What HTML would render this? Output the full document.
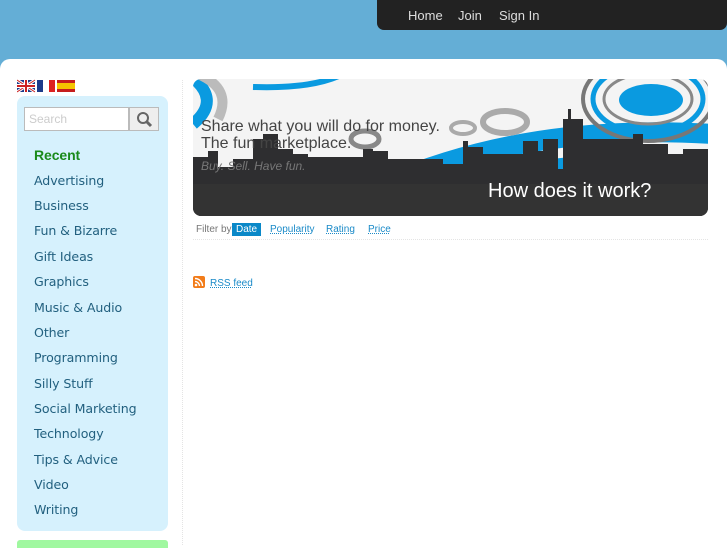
<!DOCTYPE html>
<html><head><meta charset="utf-8"><style>
*{margin:0;padding:0;box-sizing:border-box}
body{width:727px;height:545px;overflow:hidden;background:#64aed6;font-family:"Liberation Sans","DejaVu Sans",sans-serif;position:relative}
.nav{position:absolute;left:377px;top:0;width:350px;height:30px;background:#222;border-radius:0 0 7px 7px}
.nav span{position:absolute;top:8px;color:#ddd;font-size:13px;font-family:"Liberation Sans",sans-serif}
.page{position:absolute;left:0;top:59px;width:727px;height:500px;background:#fff;border-radius:10px 10px 0 0}
.flags{position:absolute;left:17px;top:79px}
.side{position:absolute;left:17px;top:96px;width:151px;height:435px;background:#d6f1fd;border-radius:8px}
.search{position:absolute;left:7px;top:11px;width:105px;height:24px;border:1px solid #bbb;background:#fff;color:#ccc;font-size:12px;padding:4px 4px}
.btn{position:absolute;left:112px;top:11px;width:30px;height:24px;border:1px solid #bbb;background:#eee}
.side a{position:absolute;left:17px;font-size:12.6px;color:#22607f;text-decoration:none;font-family:"DejaVu Sans",sans-serif;letter-spacing:-0.1px}
.green{position:absolute;left:17px;top:540px;width:151px;height:8px;background:#a0f8a0;border-radius:3px 3px 0 0}
.vline{position:absolute;left:182px;top:80px;height:465px;border-left:1px dotted #e4e4e4}
.banner{position:absolute;left:193px;top:79px;width:515px;height:137px;border-radius:8px;overflow:hidden;background:#f2f2f2}
.filter{position:absolute;left:193px;top:220px;width:515px;height:20px;border-bottom:1px dotted #e4e4e4;font-size:10px;color:#777}
.filter span{position:absolute;top:4px}
.filter a{color:#1a8ac8;text-decoration:underline dotted}
</style></head><body>
<div class="nav"><span style="left:31px">Home</span><span style="left:81px">Join</span><span style="left:122px">Sign In</span></div>
<div class="page"></div>
<svg class="flags" width="60" height="14" viewBox="0 0 60 14">
<rect x="0" y="1" width="18" height="12" fill="#1c3a8a"/><path d="M0 1L18 13M18 1L0 13" stroke="#fff" stroke-width="3"/><path d="M0 1L18 13M18 1L0 13" stroke="#c22" stroke-width="1"/><rect x="7" y="1" width="4" height="12" fill="#fff"/><rect x="0" y="5" width="18" height="4" fill="#fff"/><rect x="8" y="1" width="2" height="12" fill="#c22"/><rect x="0" y="6" width="18" height="2" fill="#c22"/>
<rect x="20" y="1" width="6" height="12" fill="#1c3a8a"/><rect x="26" y="1" width="6" height="12" fill="#fff"/><rect x="32" y="1" width="6" height="12" fill="#d22"/>
<rect x="40" y="1" width="18" height="12" fill="#c61d1d"/><rect x="40" y="4" width="18" height="6" fill="#f5c400"/>
</svg>
<div class="side">
<div class="search">Search</div>
<div class="btn"><svg width="28" height="22" viewBox="0 0 28 22"><circle cx="13" cy="10" r="5" fill="none" stroke="#666" stroke-width="2"/><path d="M16.5 13.5L21 18" stroke="#666" stroke-width="3"/></svg></div>
<a style="top:51px;color:#1a8a1a;font-weight:bold;font-family:'Liberation Sans',sans-serif;font-size:14px">Recent</a>
<a style="top:77px">Advertising</a>
<a style="top:102px">Business</a>
<a style="top:127px">Fun &amp; Bizarre</a>
<a style="top:153px">Gift Ideas</a>
<a style="top:178px">Graphics</a>
<a style="top:204px">Music &amp; Audio</a>
<a style="top:229px">Other</a>
<a style="top:254px">Programming</a>
<a style="top:280px">Silly Stuff</a>
<a style="top:305px">Social Marketing</a>
<a style="top:330px">Technology</a>
<a style="top:356px">Tips &amp; Advice</a>
<a style="top:381px">Video</a>
<a style="top:406px">Writing</a>
</div>
<div class="green"></div>
<div class="vline"></div>
<div class="banner"><svg width="515" height="137" viewBox="0 0 515 137">
<rect width="515" height="137" fill="#f4f4f4"/>
<path d="M-5 -5 Q30 20 0 45" fill="none" stroke="#0a9ae0" stroke-width="12"/>
<path d="M60 8 Q120 10 150 -5" fill="none" stroke="#0a9ae0" stroke-width="6"/>
<path d="M5 -5 Q40 10 25 40" fill="none" stroke="#bbb" stroke-width="10"/>
<path d="M110 150 Q280 40 520 55" fill="none" stroke="#0a9ae0" stroke-width="20"/>
<path d="M170 150 Q320 70 520 90" fill="none" stroke="#0a9ae0" stroke-width="22"/>
<ellipse cx="455" cy="20" rx="65" ry="42" fill="none" stroke="#777" stroke-width="4"/>
<ellipse cx="455" cy="20" rx="55" ry="34" fill="none" stroke="#0a9ae0" stroke-width="5"/>
<ellipse cx="455" cy="20" rx="44" ry="25" fill="none" stroke="#888" stroke-width="3"/>
<ellipse cx="458" cy="21" rx="32" ry="16" fill="#0a9ae0"/>
<ellipse cx="312" cy="43" rx="22" ry="11" fill="none" stroke="#aaa" stroke-width="6"/>
<ellipse cx="270" cy="49" rx="12" ry="6" fill="none" stroke="#aaa" stroke-width="4"/>
<ellipse cx="172" cy="60" rx="14" ry="8" fill="none" stroke="#888" stroke-width="5"/>
<path d="M0 137V78H15V72H25V88H40V80H60V60H70V55H85V70H100V75H115V78H170V70H180V72H195V80H250V85H270V62H275V68H290V75H330V62H345V72H350V60H365V90H370V40H375V30H378V40H390V60H440V55H450V65H475V75H490V70H515V137Z" fill="#2e2e30"/>
<path d="M0 105H515V137H0Z" fill="#333"/>
</svg>
<div style="position:absolute;left:8px;top:39px;font-size:16px;color:#444;line-height:17px">Share what you will do for money.<br>The fun marketplace.</div>
<div style="position:absolute;left:8px;top:80px;font-size:12px;color:#777;font-style:italic">Buy. Sell. Have fun.</div>
<div style="position:absolute;left:295px;top:101px;font-size:20px;color:#fff">How does it work?</div>
</div>
<div class="filter"><span style="left:3px">Filter by</span><span style="left:39px;top:3px;background:#0a88c8;color:#fff;padding:1px 4px">Date</span><span style="left:77px"><a>Popularity</a></span><span style="left:133px"><a>Rating</a></span><span style="left:175px"><a>Price</a></span></div>
<svg style="position:absolute;left:193px;top:276px" width="12" height="12" viewBox="0 0 12 12"><rect width="12" height="12" rx="2" fill="#f27c1a"/><circle cx="3" cy="9" r="1.3" fill="#fff"/><path d="M2 5.5A4.5 4.5 0 0 1 6.5 10M2 2.5A7.5 7.5 0 0 1 9.5 10" fill="none" stroke="#fff" stroke-width="1.4"/></svg>
<a style="position:absolute;left:210px;top:278px;font-size:10px;color:#1a8ac8;text-decoration:underline dotted">RSS feed</a>
</body></html>
